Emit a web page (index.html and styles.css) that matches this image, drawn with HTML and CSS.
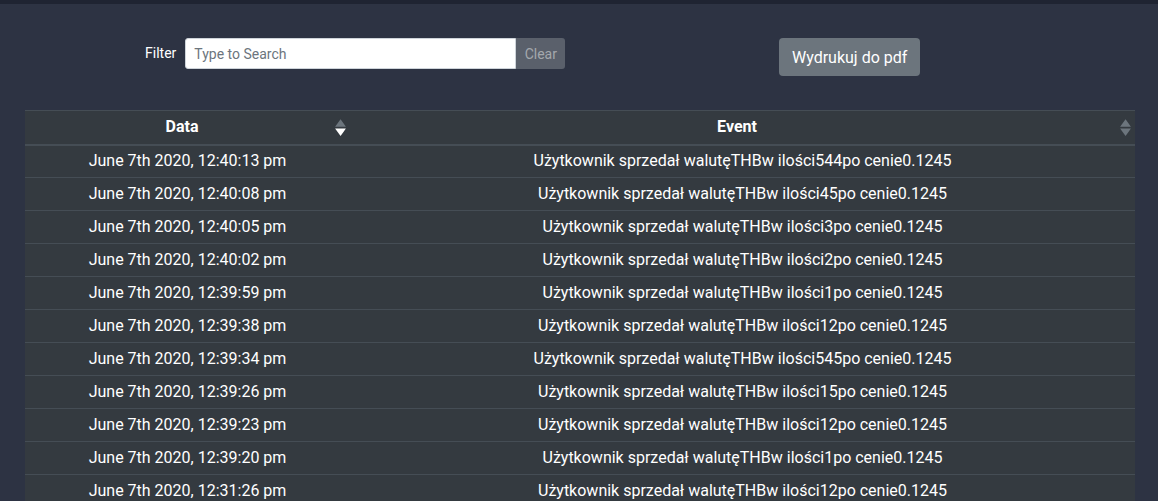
FILE: index.html
```html
<!DOCTYPE html>
<html lang="pl">
<head>
<meta charset="utf-8">
<link rel="stylesheet" href="styles.css">
</head>
<body>
<div class="topbar"></div>
<div class="container">
  <div class="toolbar">
    <div class="filter">
      <label class="filter-label" for="f">Filter</label>
      <div class="input-group">
        <input id="f" class="search" type="text" placeholder="Type to Search">
        <button class="clear" disabled>Clear</button>
      </div>
    </div>
    <div class="print">
      <button class="print-btn">Wydrukuj do pdf</button>
    </div>
  </div>
  <table class="events">
    <thead>
      <tr>
        <th class="col-date">Data
          <svg class="sort" viewBox="0 0 101 101" width="11" height="17" preserveAspectRatio="none"><path d="M51 1l25 23 24 22H1l25-22z" fill="#6c757d"/><path d="M51 101l25-23 24-22H1l25 22z" fill="#ffffff"/></svg>
        </th>
        <th class="col-event">Event
          <svg class="sort" viewBox="0 0 101 101" width="11" height="17" preserveAspectRatio="none"><path d="M51 1l25 23 24 22H1l25-22z" fill="#6c757d"/><path d="M51 101l25-23 24-22H1l25 22z" fill="#6c757d"/></svg>
        </th>
      </tr>
    </thead>
    <tbody>
      <tr><td>June 7th 2020, 12:40:13 pm</td><td>Użytkownik sprzedał walutęTHBw ilości544po cenie0.1245</td></tr>
      <tr><td>June 7th 2020, 12:40:08 pm</td><td>Użytkownik sprzedał walutęTHBw ilości45po cenie0.1245</td></tr>
      <tr><td>June 7th 2020, 12:40:05 pm</td><td>Użytkownik sprzedał walutęTHBw ilości3po cenie0.1245</td></tr>
      <tr><td>June 7th 2020, 12:40:02 pm</td><td>Użytkownik sprzedał walutęTHBw ilości2po cenie0.1245</td></tr>
      <tr><td>June 7th 2020, 12:39:59 pm</td><td>Użytkownik sprzedał walutęTHBw ilości1po cenie0.1245</td></tr>
      <tr><td>June 7th 2020, 12:39:38 pm</td><td>Użytkownik sprzedał walutęTHBw ilości12po cenie0.1245</td></tr>
      <tr><td>June 7th 2020, 12:39:34 pm</td><td>Użytkownik sprzedał walutęTHBw ilości545po cenie0.1245</td></tr>
      <tr><td>June 7th 2020, 12:39:26 pm</td><td>Użytkownik sprzedał walutęTHBw ilości15po cenie0.1245</td></tr>
      <tr><td>June 7th 2020, 12:39:23 pm</td><td>Użytkownik sprzedał walutęTHBw ilości12po cenie0.1245</td></tr>
      <tr><td>June 7th 2020, 12:39:20 pm</td><td>Użytkownik sprzedał walutęTHBw ilości1po cenie0.1245</td></tr>
      <tr><td>June 7th 2020, 12:31:26 pm</td><td>Użytkownik sprzedał walutęTHBw ilości12po cenie0.1245</td></tr>
    </tbody>
  </table>
</div>
</body>
</html>
```

FILE: styles.css
```css
* { box-sizing: border-box; }
html, body {
  margin: 0;
  padding: 0;
  background: #2d3343;
  font-family: Roboto, "Liberation Sans", Arial, sans-serif;
  font-size: 16px;
  color: #fff;
  overflow: hidden;
}
.topbar {
  height: 4px;
  background: #1f2432;
}
.container {
  padding: 0 23px 0 25px;
}
.toolbar {
  display: flex;
  align-items: flex-start;
  padding-top: 34px;
  height: 106px;
}
.filter {
  display: flex;
  align-items: center;
  padding-left: 120px;
  width: 754px;
}
.filter-label {
  font-size: 14px;
  margin-right: 9px;
  line-height: 31px;
}
.input-group {
  display: flex;
  height: 31px;
}
.search {
  width: 331px;
  height: 31px;
  border: 1px solid #ced4da;
  border-radius: 3px 0 0 3px;
  padding: 4px 8px;
  font-family: inherit;
  font-size: 14px;
  color: #495057;
  background: #fff;
  outline: none;
}
.search::placeholder { color: #6c757d; }
.clear {
  width: 49px;
  height: 31px;
  border: none;
  border-radius: 0 3px 3px 0;
  background: #5a606b;
  color: #a4a8ad;
  font-family: inherit;
  font-size: 14px;
  padding: 0;
}
.print { display: flex; }
.print-btn {
  height: 38px;
  padding: 0 13px;
  border: none;
  border-radius: 4px;
  background: #6c757d;
  color: #fff;
  font-family: inherit;
  font-size: 16px;
}
.events {
  width: 1110px;
  border-collapse: collapse;
  background: #343a40;
  table-layout: fixed;
}
.events th, .events td {
  height: 33px;
  padding: 0 5px;
  text-align: center;
  line-height: 24px;
  vertical-align: middle;
}
.events th {
  position: relative;
  height: 34px;
  font-weight: 700;
  border-top: 1px solid #454d55;
  border-bottom: 2px solid #454d55;
  padding-right: 16px;
}
.col-date { width: 325px; }
.sort {
  position: absolute;
  right: 4px;
  top: 8px;
}
.events td {
  border-bottom: 1px solid #454d55;
}
```
